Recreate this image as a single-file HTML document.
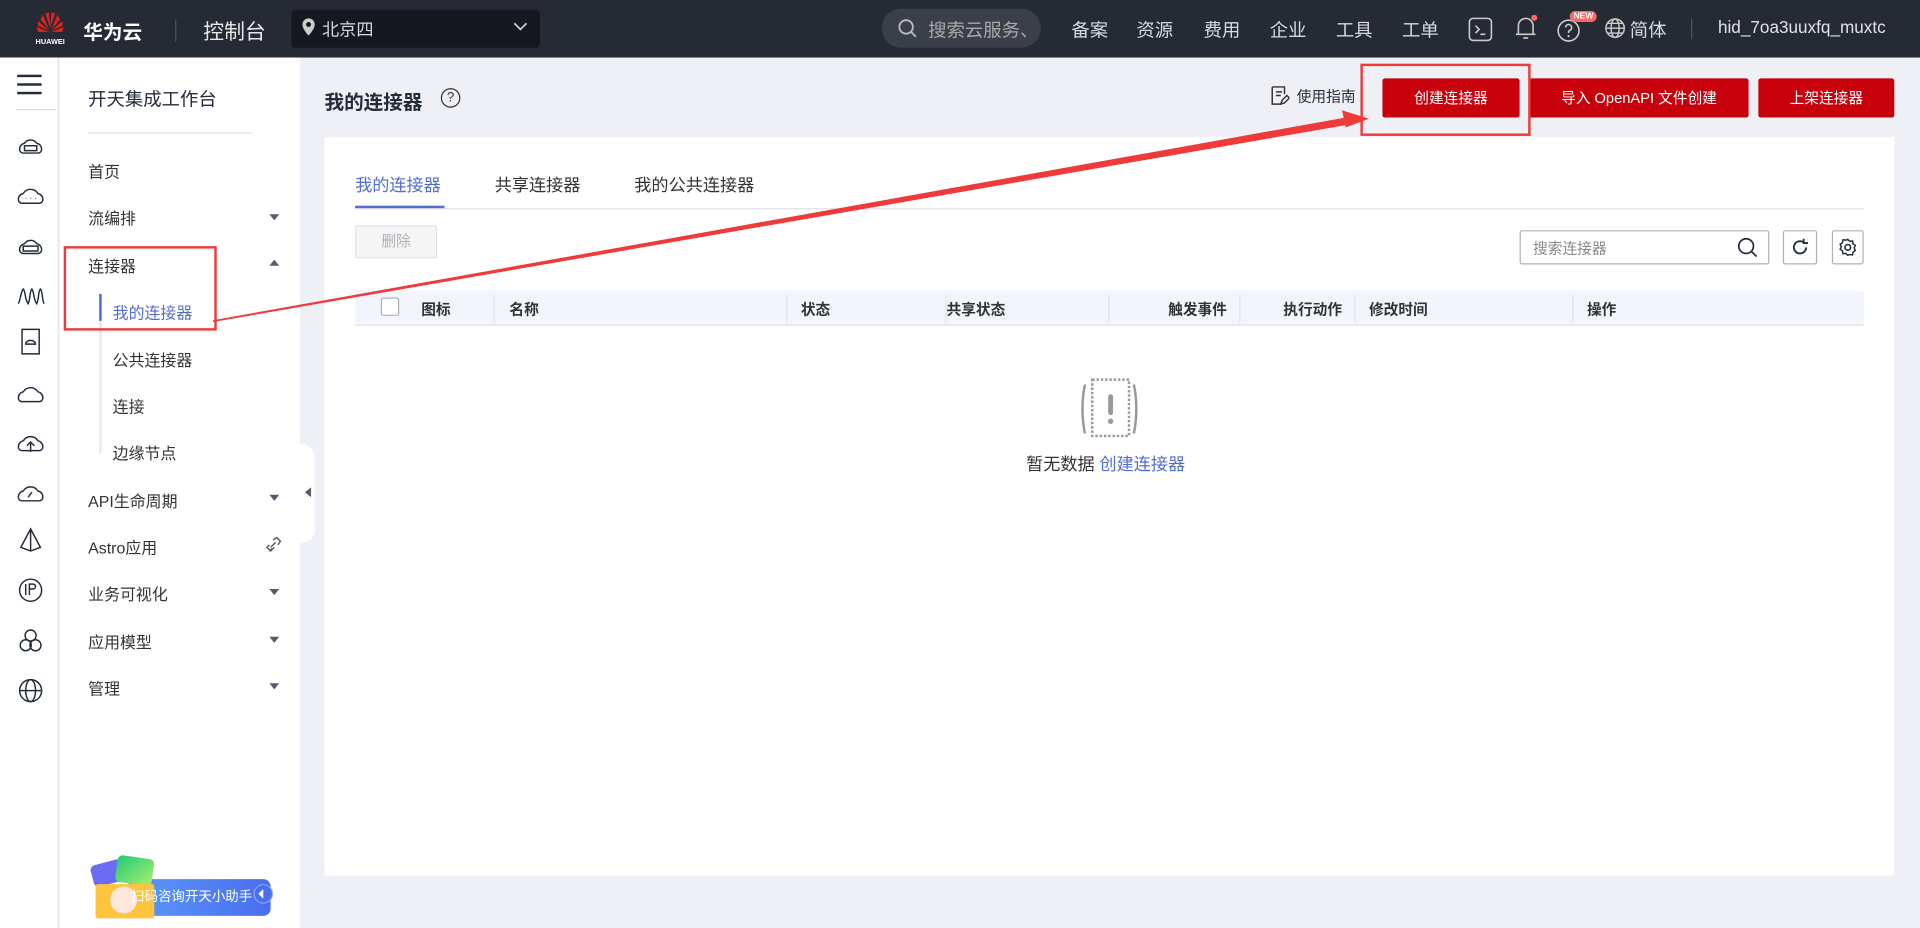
<!DOCTYPE html>
<html><head><meta charset="utf-8">
<style>
*{margin:0;padding:0;box-sizing:border-box}
html,body{width:1920px;height:928px;overflow:hidden;background:#eef0f5;font-family:"Liberation Sans","Noto Sans CJK SC",sans-serif}
#w{position:absolute;left:0;top:0;width:1568px;height:758px;transform:scale(1.22449);transform-origin:0 0;background:#eef0f5}
.a{position:absolute;white-space:nowrap}
.top{left:0;top:0;width:1568px;height:47px;background:#252a35}
.tw{color:#d6d9e0;font-size:15px}
.nav{font-size:13px;color:#333}
.car{width:0;height:0;border-left:4.5px solid transparent;border-right:4.5px solid transparent;border-top:5px solid #555b6a}
.carup{width:0;height:0;border-left:4.5px solid transparent;border-right:4.5px solid transparent;border-bottom:5px solid #555b6a}
.btn{background:#c7000b;color:#fff;font-size:12px;text-align:center;line-height:32px;height:32px;border-radius:2px}
.th{font-size:12px;color:#333;font-weight:bold;top:244px}
.sep{top:241px;width:1px;height:22px;background:#e0e3ea}
</style></head><body><div id="w">
<div class="a top"></div>
<svg class="a" style="left:25px;top:6px" width="32" height="32" viewBox="0 0 32 32">
<g fill="#e3221a"><path d="M15 4l1 13-4-12z"/><path d="M17 4l-1 13 4-12z"/><path d="M10 6l5 12-7-8z"/><path d="M22 6l-5 12 7-8z"/><path d="M6 11l9 8-9-4z"/><path d="M26 11l-9 8 9-4z"/><path d="M5 16l10 4H6z"/><path d="M27 16l-10 4h9z"/></g>
<text x="16" y="30" font-size="6" fill="#fff" text-anchor="middle" font-family="Liberation Sans" font-weight="bold">HUAWEI</text></svg>
<div class="a" style="left:68px;top:13px;color:#fff;font-size:16px;font-weight:bold">华为云</div>
<div class="a" style="left:143px;top:16px;width:1px;height:18px;background:#4a4f5a"></div>
<div class="a" style="left:166px;top:12px;color:#e8e8e8;font-size:17px">控制台</div>
<div class="a" style="left:238px;top:8px;width:203px;height:31px;background:#15181e;border-radius:3px"></div>
<svg class="a" style="left:246px;top:14px" width="12" height="16" viewBox="0 0 12 16"><path d="M6 1a5 5 0 0 0-5 5c0 4 5 9 5 9s5-5 5-9a5 5 0 0 0-5-5zm0 7a2 2 0 1 1 0-4 2 2 0 0 1 0 4z" fill="#ccc"/></svg>
<div class="a tw" style="left:263px;top:14px;font-size:14px">北京四</div>
<svg class="a" style="left:419px;top:18px" width="12" height="8"><path d="M1 1l5 5 5-5" stroke="#ccc" fill="none" stroke-width="1.5"/></svg>
<div class="a" style="left:720px;top:7px;width:130px;height:32px;background:#3a3f4a;border-radius:16px;overflow:hidden"></div>
<svg class="a" style="left:733px;top:15px" width="16" height="17"><circle cx="7" cy="7" r="5.5" stroke="#bbb" fill="none" stroke-width="1.5"/><path d="M11 11l4 4" stroke="#bbb" stroke-width="1.5"/></svg>
<div class="a tw" style="left:758px;top:14px;width:90px;overflow:hidden;color:#aaa">搜索云服务、快</div>
<div class="a tw" style="left:875px;top:14px">备案</div>
<div class="a tw" style="left:928px;top:14px">资源</div>
<div class="a tw" style="left:983px;top:14px">费用</div>
<div class="a tw" style="left:1037px;top:14px">企业</div>
<div class="a tw" style="left:1091px;top:14px">工具</div>
<div class="a tw" style="left:1145px;top:14px">工单</div>
<svg class="a" style="left:1199px;top:14px" width="20" height="20"><rect x="1" y="1" width="18" height="18" rx="3" stroke="#ccc" fill="none" stroke-width="1.3"/><path d="M6 7l3 3-3 3M10 14h4" stroke="#ccc" fill="none" stroke-width="1.3"/></svg>
<svg class="a" style="left:1236px;top:12px" width="20" height="22"><path d="M4 16V9a6 6 0 0 1 12 0v7zM2 16h16M8 19h4" stroke="#ccc" fill="none" stroke-width="1.3"/><circle cx="17" cy="2.5" r="2.5" fill="#f66"/></svg>
<svg class="a" style="left:1271px;top:14px" width="22" height="22"><circle cx="10" cy="11" r="8.5" stroke="#ccc" fill="none" stroke-width="1.3"/><path d="M7.5 8.5a2.5 2.5 0 1 1 3.5 2.3c-1 .5-1 1-1 2.2" stroke="#ccc" fill="none" stroke-width="1.3"/><circle cx="10" cy="15.5" r=".9" fill="#ccc"/></svg>
<div class="a" style="left:1282px;top:9px;background:#f66;color:#fff;font-size:7px;font-weight:bold;border-radius:6px;padding:1px 3px">NEW</div>
<svg class="a" style="left:1310px;top:14px" width="18" height="18"><circle cx="9" cy="9" r="7.5" stroke="#ccc" fill="none" stroke-width="1.2"/><ellipse cx="9" cy="9" rx="3.3" ry="7.5" stroke="#ccc" fill="none" stroke-width="1.2"/><path d="M1.5 9h15M3 5h12M3 13h12" stroke="#ccc" stroke-width="1.1"/></svg>
<div class="a tw" style="left:1331px;top:14px">简体</div>
<div class="a" style="left:1381px;top:15px;width:1px;height:17px;background:#4a4f5a"></div>
<div class="a tw" style="left:1403px;top:14px;font-size:14px;color:#e0e2e8">hid_7oa3uuxfq_muxtc</div>

<!-- icon rail -->
<div class="a" style="left:0;top:47px;width:48px;height:711px;background:#fff;border-right:1px solid #e3e5ea"></div>
<div class="a" style="left:14px;top:61px;width:20px;height:2px;background:#252b3a;box-shadow:0 7px 0 #252b3a,0 14px 0 #252b3a"></div>
<div class="a" style="left:13px;top:89px;width:33px;height:1px;background:#ddd"></div>
<svg class="a" style="left:12px;top:105px" width="26" height="480" viewBox="0 0 26 480" fill="none" stroke="#252b3a" stroke-width="1.2">
<path d="M4 17a5 5 0 0 1 4-5 6 6 0 0 1 10 0 5 5 0 0 1 4 5 3 3 0 0 1-3 3H7a3 3 0 0 1-3-3zM8 14h10v4H8z"/>
<path d="M3 58a5 5 0 0 1 4-5 7 7 0 0 1 12 0 5 5 0 0 1 4 5 3 3 0 0 1-3 3H6a3 3 0 0 1-3-3zM9 57h.5M13 57h.5M17 57h.5"/>
<path d="M4 99a5 5 0 0 1 4-5 6 6 0 0 1 10 0 5 5 0 0 1 4 5 3 3 0 0 1-3 3H7a3 3 0 0 1-3-3zM7 96h12v4H7z"/>
<path d="M3 143c2-4 2-10 4-12 2 2 1 8 4 12 2-4 1-10 3-12 2 2 1 8 4 12 2-4 1-10 3-12 2 2 1 8 3 12"/>
<path d="M6 164h14v20H6zM9 176a4 3 0 0 1 8 0z"/>
<path d="M3 220a5 5 0 0 1 4-5 7 7 0 0 1 12 0 5 5 0 0 1 4 5 3 3 0 0 1-3 3H6a3 3 0 0 1-3-3z"/>
<path d="M3 260a5 5 0 0 1 4-5 7 7 0 0 1 12 0 5 5 0 0 1 4 5 3 3 0 0 1-3 3H6a3 3 0 0 1-3-3zM13 264v-8M10 259l3-3 3 3"/>
<path d="M3 301a5 5 0 0 1 4-5 7 7 0 0 1 12 0 5 5 0 0 1 4 5 3 3 0 0 1-3 3H6a3 3 0 0 1-3-3zM11 301l3-4"/>
<path d="M13 327l-8 15 8 3 8-3zM13 327v18"/>
<circle cx="13" cy="377" r="9"/><path d="M9 372v9M12 381v-9h3a2 2 0 0 1 0 4h-3"/>
<circle cx="13" cy="414" r="4.5"/><circle cx="9" cy="422" r="4.5"/><circle cx="17" cy="422" r="4.5"/>
<circle cx="13" cy="459" r="9"/><ellipse cx="13" cy="459" rx="4" ry="9"/><path d="M4 459h18"/>
</svg>

<!-- nav panel -->
<div class="a" style="left:49px;top:47px;width:196px;height:711px;background:#fff"></div>
<div class="a" style="left:72px;top:70px;font-size:15px;color:#252b3a">开天集成工作台</div>
<div class="a" style="left:72px;top:108px;width:134px;height:1px;background:#e3e5ea"></div>
<div class="a nav" style="left:72px;top:130px">首页</div>
<div class="a nav" style="left:72px;top:168px">流编排</div><div class="a car" style="left:220px;top:175px"></div>
<div class="a nav" style="left:72px;top:207px">连接器</div><div class="a carup" style="left:220px;top:212px"></div>
<div class="a" style="left:81px;top:240px;width:2px;height:130px;background:#e6e8ee"></div>
<div class="a" style="left:81px;top:240px;width:2px;height:22px;background:#526ecc"></div>
<div class="a nav" style="left:92px;top:245px;color:#526ecc">我的连接器</div>
<div class="a nav" style="left:92px;top:284px">公共连接器</div>
<div class="a nav" style="left:92px;top:322px">连接</div>
<div class="a nav" style="left:92px;top:360px">边缘节点</div>
<div class="a nav" style="left:72px;top:399px">API生命周期</div><div class="a car" style="left:220px;top:404px"></div>
<div class="a nav" style="left:72px;top:437px">Astro应用</div>
<svg class="a" style="left:217px;top:438px" width="14" height="14"><path d="M3 12l2-2M8 5l-4 4M6 3l3-2 3 3-2 3M3 7l-2 2 3 3 3-3" stroke="#555b6a" fill="none" stroke-width="1.2"/></svg>
<div class="a nav" style="left:72px;top:475px">业务可视化</div><div class="a car" style="left:220px;top:481px"></div>
<div class="a nav" style="left:72px;top:514px">应用模型</div><div class="a car" style="left:220px;top:520px"></div>
<div class="a nav" style="left:72px;top:552px">管理</div><div class="a car" style="left:220px;top:558px"></div>
<div class="a" style="left:245px;top:363px;width:12px;height:80px;background:#fff;border-radius:0 10px 10px 0"></div>
<div class="a" style="left:249px;top:398px;width:0;height:0;border-top:4px solid transparent;border-bottom:4px solid transparent;border-right:5px solid #555b6a"></div>
<!-- assistant -->
<div class="a" style="left:105px;top:718px;width:116px;height:30px;background:linear-gradient(90deg,#5a9af8,#4a6df0);border-radius:0 6px 6px 0"></div>
<div class="a" style="left:75px;top:704px;width:26px;height:18px;background:#6b6cf3;border-radius:4px;transform:rotate(-15deg)"></div>
<div class="a" style="left:95px;top:700px;width:30px;height:22px;background:linear-gradient(135deg,#22c97a,#a8f06a);border-radius:4px;transform:rotate(8deg)"></div>
<div class="a" style="left:78px;top:722px;width:48px;height:28px;background:#ffc43d;border-radius:2px"></div>
<div class="a" style="left:90px;top:724px;width:22px;height:22px;background:#fde7dc;border-radius:50%"></div>
<div class="a" style="left:107px;top:724px;font-size:11px;color:#fff">扫码咨询开天小助手</div>
<div class="a" style="left:207px;top:722px;width:16px;height:16px;border-radius:50%;background:#4a6df0;border:1px solid #8aa8ff"></div>
<div class="a" style="left:211px;top:726px;width:0;height:0;border-top:4px solid transparent;border-bottom:4px solid transparent;border-right:4px solid #fff"></div>

<!-- header -->
<div class="a" style="left:265px;top:70px;font-size:16px;font-weight:bold;color:#252b3a">我的连接器</div>
<div class="a" style="left:360px;top:72px;width:16px;height:16px;border:1.3px solid #333;border-radius:50%;font-size:11px;text-align:center;line-height:14px;color:#333">?</div>
<svg class="a" style="left:1037px;top:70px" width="16" height="16"><path d="M2 1h10v6M2 1v14h7M5 5h5M5 8h4" stroke="#333" fill="none" stroke-width="1.2"/><path d="M9 15l1-3 4-4 2 2-4 4z" stroke="#333" fill="none" stroke-width="1.2"/></svg>
<div class="a" style="left:1059px;top:70px;font-size:12px;color:#252b3a">使用指南</div>
<div class="a btn" style="left:1129px;top:64px;width:112px">创建连接器</div>
<div class="a btn" style="left:1249px;top:64px;width:179px">导入 OpenAPI 文件创建</div>
<div class="a btn" style="left:1436px;top:64px;width:111px">上架连接器</div>

<!-- card -->
<div class="a" style="left:265px;top:112px;width:1282px;height:603px;background:#fff"></div>
<div class="a" style="left:290px;top:141px;font-size:14px;color:#526ecc">我的连接器</div>
<div class="a" style="left:404px;top:141px;font-size:14px;color:#333">共享连接器</div>
<div class="a" style="left:518px;top:141px;font-size:14px;color:#333">我的公共连接器</div>
<div class="a" style="left:290px;top:170px;width:1232px;height:1px;background:#dfe1e6"></div>
<div class="a" style="left:290px;top:168px;width:73px;height:2px;background:#526ecc"></div>
<div class="a" style="left:290px;top:184px;width:67px;height:27px;background:#f5f5f6;border:1px solid #dfe1e6;border-radius:2px;font-size:12px;color:#adb0b8;text-align:center;line-height:25px">删除</div>
<div class="a" style="left:1241px;top:188px;width:204px;height:28px;border:1px solid #adb0b8;border-radius:2px"></div>
<div class="a" style="left:1252px;top:194px;font-size:12px;color:#888">搜索连接器</div>
<svg class="a" style="left:1418px;top:193px" width="18" height="18"><circle cx="8" cy="8" r="6" stroke="#252b3a" fill="none" stroke-width="1.4"/><path d="M12.5 12.5l4 4" stroke="#252b3a" stroke-width="1.4"/></svg>
<div class="a" style="left:1456px;top:188px;width:28px;height:28px;border:1px solid #adb0b8;border-radius:2px"></div>
<svg class="a" style="left:1462px;top:194px" width="16" height="16"><path d="M13 8a5 5 0 1 1-2-4M11 1v3.5h3.5" stroke="#252b3a" fill="none" stroke-width="1.5"/></svg>
<div class="a" style="left:1496px;top:188px;width:26px;height:28px;border:1px solid #adb0b8;border-radius:2px"></div>
<svg class="a" style="left:1501px;top:194px" width="16" height="16"><circle cx="8" cy="8" r="2.3" stroke="#252b3a" fill="none" stroke-width="1.3"/><path d="M8 1.5l1.6 1.6 2.3-.3.4 2.3 1.9 1.3-1 2.1 1 2-1.9 1.4-.4 2.3-2.3-.3L8 14.5l-1.6-1.6-2.3.3-.4-2.3-1.9-1.3 1-2.1-1-2 1.9-1.4.4-2.3 2.3.3z" stroke="#252b3a" fill="none" stroke-width="1.2"/></svg>
<!-- table -->
<div class="a" style="left:290px;top:237px;width:1232px;height:29px;background:#f2f5fc;border-bottom:1px solid #dfe1e6"></div>
<div class="a" style="left:311px;top:243px;width:15px;height:15px;border:1px solid #adb0b8;background:#fff;border-radius:2px"></div>
<div class="a th" style="left:344px">图标</div>
<div class="a th" style="left:416px">名称</div>
<div class="a th" style="left:654px">状态</div>
<div class="a th" style="left:773px">共享状态</div>
<div class="a th" style="left:954px">触发事件</div>
<div class="a th" style="left:1048px">执行动作</div>
<div class="a th" style="left:1118px">修改时间</div>
<div class="a th" style="left:1296px">操作</div>
<div class="a sep" style="left:403px"></div><div class="a sep" style="left:642px"></div><div class="a sep" style="left:772px"></div><div class="a sep" style="left:905px"></div><div class="a sep" style="left:1012px"></div><div class="a sep" style="left:1106px"></div><div class="a sep" style="left:1284px"></div>
<svg class="a" style="left:878px;top:306px" width="58" height="54"><path d="M8 8q-4 20 0 40M48 8q4 20 0 40" stroke="#999" fill="none" stroke-width="2"/><path d="M14 4h30v46H14z" stroke="#999" fill="none" stroke-width="2" stroke-dasharray="2 1.5"/><path d="M29 18v13" stroke="#999" stroke-width="4" stroke-linecap="round"/><circle cx="29" cy="38" r="2.2" fill="#999"/></svg>
<div class="a" style="left:838px;top:369px;font-size:14px;color:#333">暂无数据 <span style="color:#526ecc">创建连接器</span></div>

<!-- annotations -->
<div class="a" style="left:1111px;top:52px;width:139px;height:59px;border:2px solid #f03a3a"></div>
<div class="a" style="left:52px;top:201px;width:125px;height:69px;border:2px solid #f03a3a"></div>
<svg class="a" style="left:0;top:0" width="1568" height="758"><path d="M174 261.5L174 263L1100 102L1099 96z" fill="#f03a3a"/><path d="M1118 97l-22 -7 3 14z" fill="#f03a3a"/></svg>
</div></body></html>
